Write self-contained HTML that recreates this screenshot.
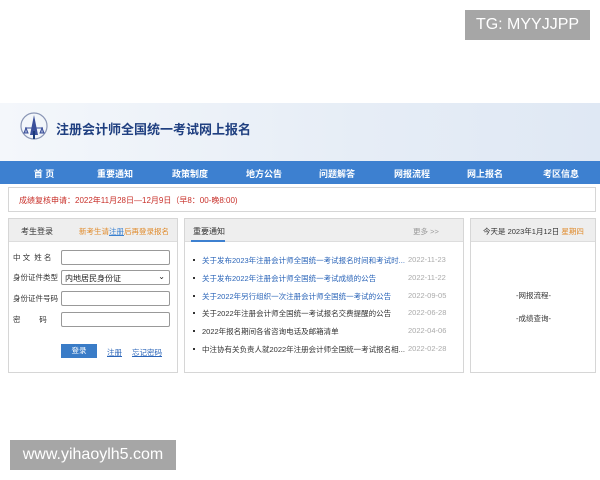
<!DOCTYPE html>
<html><head><meta charset="utf-8"><style>
*{margin:0;padding:0;box-sizing:border-box}
body{width:600px;height:480px;background:#fff;position:relative;overflow:hidden;font-family:"Liberation Sans","Noto Sans CJK SC",sans-serif;font-size:8px;color:#333}
.a{position:absolute;white-space:nowrap}
.wm{background:#a6a6a6;color:#fff;font-size:16px;display:flex;align-items:center;justify-content:center}
.hdr{left:0;top:103px;width:600px;height:58px;background:linear-gradient(90deg,#f4f7fb,#e6edf6 60%,#dfe8f4)}
.nav{left:0;top:161px;width:600px;height:23px;background:#3d80d0}
.nav span{position:absolute;top:6px;color:#fff;font-size:9px;font-weight:bold;transform:translateX(-50%)}
.box{border:1px solid #d6d6d6;background:#fff}
.ph{position:absolute;left:0;top:0;right:0;height:23px;background:#eeeeee;border-bottom:1px solid #ddd}
.in{position:absolute;left:52px;width:109px;height:15px;border:1px solid #999;background:#fff;border-radius:2px}
.lb{position:absolute;left:4px;font-size:7.5px;color:#333}
.li{position:absolute;left:8px;font-size:7.5px}
.li i{position:absolute;left:0;top:4px;width:2px;height:2px;background:#333}
.li b{font-weight:normal;position:absolute;left:9px}
.li em{font-style:normal;position:absolute;left:215px;color:#aaa}
.bl{color:#2a64b8}
</style></head><body>
<div class="a wm" style="left:465px;top:10px;width:125px;height:30px">TG: MYYJJPP</div>
<div class="a hdr"></div>
<svg class="a" style="left:18px;top:111px" width="32" height="32" viewBox="0 0 32 32"><circle cx="16" cy="15" r="13" fill="none" stroke="#8a96b5" stroke-width="1.2"/><path d="M16 4 L12 24 L20 24 Z" fill="#3a4f9a"/><path d="M7 17 L25 17 M8 17 L6 22 L10 22 Z M24 17 L22 22 L26 22 Z" stroke="#3a4f9a" stroke-width="1" fill="#9aa8d0"/><path d="M16 20 L16 28" stroke="#1a3a7a" stroke-width="2"/></svg>
<div class="a" style="left:56px;top:119px;font-size:13px;font-weight:bold;color:#1f3f80">注册会计师全国统一考试网上报名</div>
<div class="a nav"><span style="left:44px">首 页</span><span style="left:115px">重要通知</span><span style="left:190px">政策制度</span><span style="left:264px">地方公告</span><span style="left:337px">问题解答</span><span style="left:412px">网报流程</span><span style="left:485px">网上报名</span><span style="left:561px">考区信息</span></div>
<div class="a box" style="left:8px;top:187px;width:588px;height:25px"><span class="a" style="left:10px;top:7px;color:#c8302a;font-size:8px">成绩复核申请：2022年11月28日—12月9日（早8：00-晚8:00)</span></div>

<div class="a box" style="left:8px;top:218px;width:170px;height:155px">
<div class="ph"><span class="a" style="left:12px;top:7px;font-size:8px;color:#333">考生登录</span><span class="a" style="left:70px;top:7px;font-size:7.5px;color:#e08a2a">新考生请<u style="color:#3a80d0">注册</u>后再登录报名</span></div>
<span class="lb" style="top:33px">中 文 &nbsp;姓 名</span><div class="in" style="top:31px"></div>
<span class="lb" style="top:53px">身份证件类型</span><div class="in" style="top:51px;font-size:8px;padding:2px 3px;color:#222">内地居民身份证<span style="position:absolute;right:4px;top:1px">⌄</span></div>
<span class="lb" style="top:74px">身份证件号码</span><div class="in" style="top:72px"></div>
<span class="lb" style="top:95px">密 &nbsp; &nbsp; &nbsp; &nbsp; 码</span><div class="in" style="top:93px"></div>
<div class="a" style="left:52px;top:125px;width:36px;height:14px;background:#3a7cc7;color:#fff;font-size:7.5px;text-align:center;line-height:14px">登录</div>
<span class="a" style="left:98px;top:128px;color:#2a64b8;text-decoration:underline;font-size:7.5px">注册</span>
<span class="a" style="left:123px;top:128px;color:#2a64b8;text-decoration:underline;font-size:7.5px">忘记密码</span>
</div>

<div class="a box" style="left:184px;top:218px;width:280px;height:155px">
<div class="ph"><span class="a" style="left:8px;top:7px;font-size:8px">重要通知</span><div class="a" style="left:6px;top:21px;width:34px;height:2px;background:#3d80d0"></div><span class="a" style="left:228px;top:7px;color:#999;font-size:7.5px">更多 &gt;&gt;</span></div>
<div class="li bl" style="top:36px"><i></i><b>关于发布2023年注册会计师全国统一考试报名时间和考试时...</b><em>2022-11-23</em></div>
<div class="li bl" style="top:54px"><i></i><b>关于发布2022年注册会计师全国统一考试成绩的公告</b><em>2022-11-22</em></div>
<div class="li bl" style="top:72px"><i></i><b>关于2022年另行组织一次注册会计师全国统一考试的公告</b><em>2022-09-05</em></div>
<div class="li" style="top:89px"><i></i><b>关于2022年注册会计师全国统一考试报名交费提醒的公告</b><em>2022-06-28</em></div>
<div class="li" style="top:107px"><i></i><b>2022年报名期间各省咨询电话及邮箱清单</b><em>2022-04-06</em></div>
<div class="li" style="top:125px"><i></i><b>中注协有关负责人就2022年注册会计师全国统一考试报名相...</b><em>2022-02-28</em></div>
</div>

<div class="a box" style="left:470px;top:218px;width:126px;height:155px">
<div class="ph"><span class="a" style="left:12px;top:7px;font-size:7.5px">今天是 2023年1月12日 <span style="color:#e08a2a">星期四</span></span></div>
<span class="a" style="left:45px;top:71px;font-size:7.5px">-网报流程-</span>
<span class="a" style="left:45px;top:94px;font-size:7.5px">-成绩查询-</span>
</div>

<div class="a wm" style="left:10px;top:440px;width:166px;height:30px">www.yihaoylh5.com</div>
</body></html>
